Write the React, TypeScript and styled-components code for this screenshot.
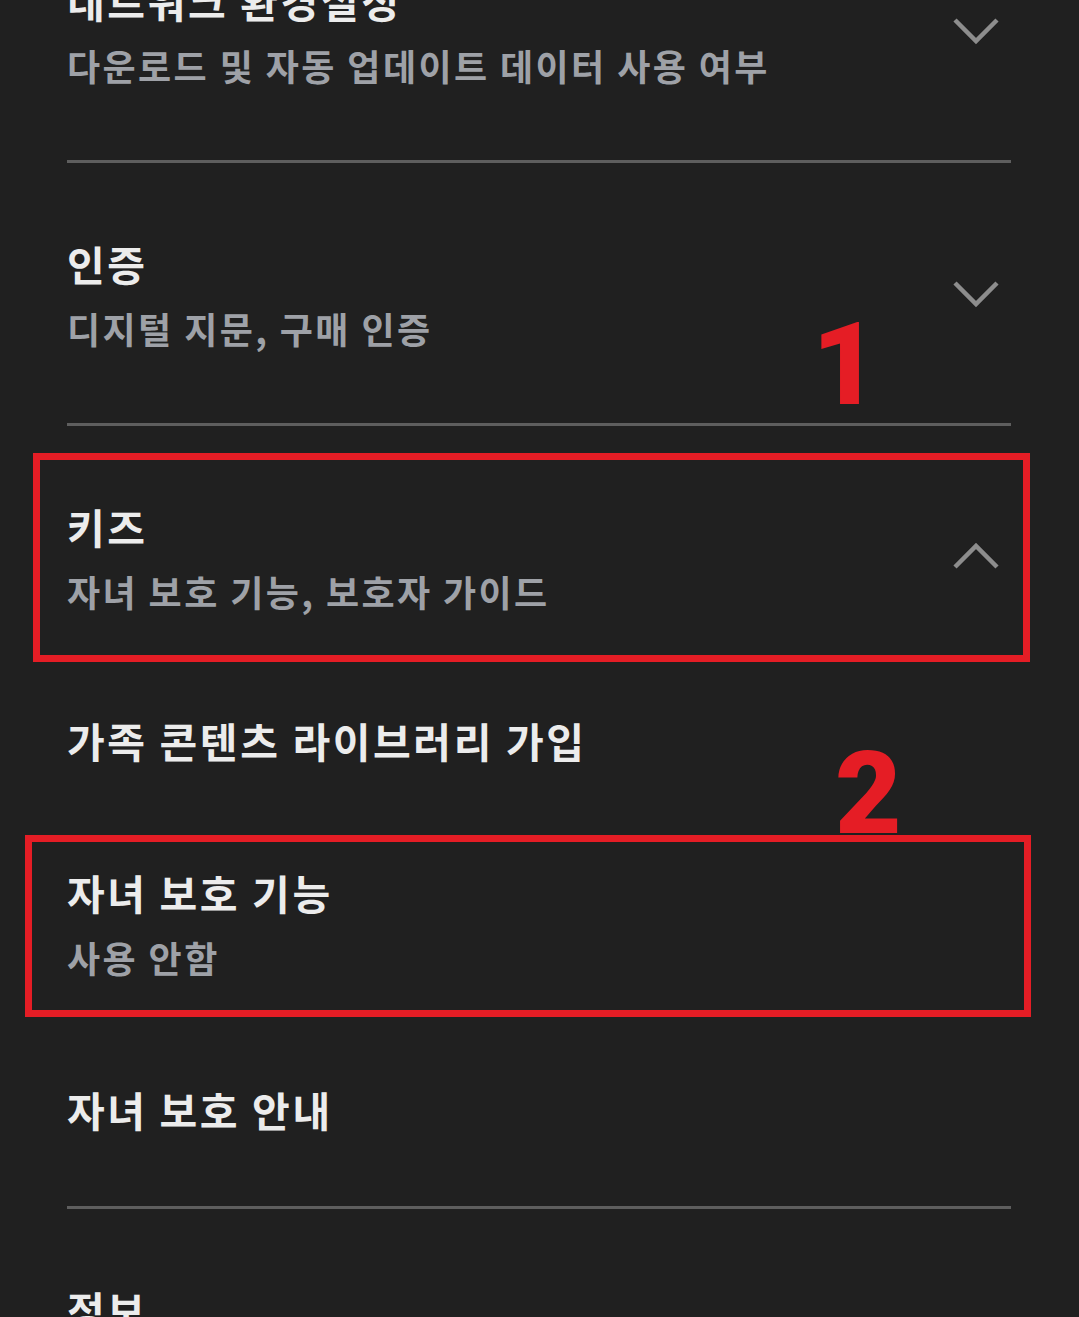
import styled, { createGlobalStyle } from 'styled-components'

const GlobalStyle = createGlobalStyle`
  html, body {
    margin: 0;
    padding: 0;
    background: #202020;
  }
  body {
    font-family: 'Noto Sans CJK KR', 'Noto Sans', sans-serif;
  }
`

const dividerColor = '#5e5e5e'
const annotationRed = '#e51d25'

const Screen = styled.div({
  position: 'relative',
  width: 1079,
  height: 1317,
  overflow: 'hidden',
  background: '#202020',
})

// the settings page is scrolled, first row partly above the fold
const List = styled.div({
  marginTop: -100,
  padding: '0 68px 0 67px',
  display: 'flex',
  flexDirection: 'column',
})

const Header = styled.div<{ $open?: boolean }>`
  display: flex;
  align-items: center;
  justify-content: space-between;
  padding: 73px 12px ${(p) => (p.$open ? 46 : 68)}px 0;
`

const Texts = styled.div({
  display: 'flex',
  flexDirection: 'column',
  gap: 11,
})

const Title = styled.div({
  fontSize: 41,
  lineHeight: '54px',
  fontWeight: 700,
  letterSpacing: '2.6px',
  color: '#ececec',
  whiteSpace: 'nowrap',
})

const Subtitle = styled.div({
  fontSize: 36,
  lineHeight: '54px',
  fontWeight: 700,
  letterSpacing: '2.4px',
  color: '#9ea1a7',
  whiteSpace: 'nowrap',
})

const ChevronSvg = styled.svg<{ $up?: boolean }>`
  width: 46px;
  height: 27px;
  margin-bottom: ${(p) => (p.$up ? 7 : 3)}px;
  flex-shrink: 0;
`

const Divider = styled.div({
  height: 3,
  background: dividerColor,
})

const SubGroup = styled.div({
  display: 'flex',
  flexDirection: 'column',
  paddingBottom: 21,
})

const SubItem = styled.div({
  display: 'flex',
  flexDirection: 'column',
  gap: 11,
  padding: '49px 0',
})

const Highlight = styled.div<{ $left: number; $top: number; $width: number; $height: number }>`
  position: absolute;
  left: ${(p) => p.$left}px;
  top: ${(p) => p.$top}px;
  width: ${(p) => p.$width}px;
  height: ${(p) => p.$height}px;
  box-sizing: border-box;
  border: 7px solid ${annotationRed};
  pointer-events: none;
`

const Marker = styled.div<{ $left: number; $top: number }>`
  position: absolute;
  left: ${(p) => p.$left}px;
  top: ${(p) => p.$top}px;
  font-family: Roboto, 'Liberation Sans', sans-serif;
  font-weight: 900;
  font-size: 115px;
  line-height: 1;
  color: ${annotationRed};
`

function Chevron({ up }: { up?: boolean }) {
  return (
    <ChevronSvg viewBox="0 0 46 27" $up={up}>
      <polyline
        points={up ? '2,25 23,4 44,25' : '2,2 23,23 44,2'}
        fill="none"
        stroke="#8d8d8d"
        strokeWidth={4.5}
      />
    </ChevronSvg>
  )
}

type Section = { title: string; subtitle?: string }

const collapsed: Section[] = [
  { title: '네트워크 환경설정', subtitle: '다운로드 및 자동 업데이트 데이터 사용 여부' },
  { title: '인증', subtitle: '디지털 지문, 구매 인증' },
]

const kidsItems: Section[] = [
  { title: '가족 콘텐츠 라이브러리 가입' },
  { title: '자녀 보호 기능', subtitle: '사용 안함' },
  { title: '자녀 보호 안내' },
]

export default function App() {
  return (
    <Screen>
      <GlobalStyle />
      <List>
        {collapsed.map((s) => (
          <div key={s.title}>
            <Header>
              <Texts>
                <Title>{s.title}</Title>
                <Subtitle>{s.subtitle}</Subtitle>
              </Texts>
              <Chevron />
            </Header>
            <Divider />
          </div>
        ))}

        <Header $open>
          <Texts>
            <Title>키즈</Title>
            <Subtitle>자녀 보호 기능, 보호자 가이드</Subtitle>
          </Texts>
          <Chevron up />
        </Header>
        <SubGroup>
          {kidsItems.map((s) => (
            <SubItem key={s.title}>
              <Title>{s.title}</Title>
              {s.subtitle && <Subtitle>{s.subtitle}</Subtitle>}
            </SubItem>
          ))}
        </SubGroup>
        <Divider />

        <Header>
          <Texts>
            <Title>정보</Title>
          </Texts>
        </Header>
      </List>

      <Highlight $left={33} $top={453} $width={997} $height={209} />
      <Highlight $left={25} $top={835} $width={1006} $height={182} />
      <Marker $left={812} $top={307}>1</Marker>
      <Marker $left={835} $top={736}>2</Marker>
    </Screen>
  )
}
